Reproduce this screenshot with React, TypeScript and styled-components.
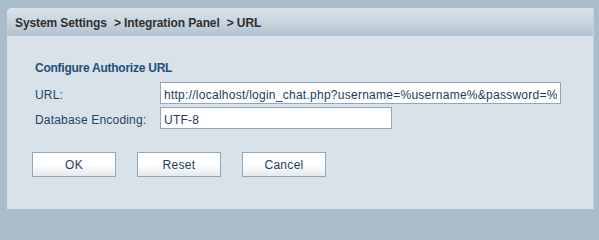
import styled, { createGlobalStyle } from "styled-components";

const GlobalStyle = createGlobalStyle`
  html, body {
    margin: 0;
    padding: 0;
    background: #a9bccb;
  }
  body {
    font-family: "Liberation Sans", Arial, sans-serif;
    font-size: 12px;
  }
`;

const crumbs = ["System Settings", "> Integration Panel", "> URL"];

const fields = [
  {
    label: "URL:",
    value: "http://localhost/login_chat.php?username=%username%&password=%",
    width: 401,
  },
  { label: "Database Encoding:", value: "UTF-8", width: 232 },
];

const App = () => (
  <StyledPage>
    <GlobalStyle />
    <StyledPanel>
      <StyledHeader>
        {crumbs.map((c) => (
          <StyledCrumb key={c}>{c}</StyledCrumb>
        ))}
      </StyledHeader>
      <StyledBody>
        <StyledTitle>Configure Authorize URL</StyledTitle>
        <StyledForm>
          {fields.map((f) => (
            <StyledRow key={f.label}>
              <StyledLabel>{f.label}</StyledLabel>
              <StyledInput $width={f.width} defaultValue={f.value} />
            </StyledRow>
          ))}
        </StyledForm>
        <StyledButtons>
          <StyledButton>OK</StyledButton>
          <StyledButton>Reset</StyledButton>
          <StyledButton>Cancel</StyledButton>
        </StyledButtons>
      </StyledBody>
    </StyledPanel>
  </StyledPage>
);

const StyledPage = styled.div`
  padding: 8px 5px 7px 7px;
`;

const StyledPanel = styled.div`
  width: 587px;
  height: 201px;
  box-sizing: border-box;
  background: #d9e1e9;
  border-top-left-radius: 5px;
  border-right: 1px solid #c5d1db;
  overflow: hidden;
  display: flex;
  flex-direction: column;
`;

const StyledHeader = styled.div`
  height: 28px;
  flex-shrink: 0;
  display: flex;
  align-items: center;
  padding: 1px 0 0 8px;
  box-sizing: border-box;
  background: linear-gradient(to bottom, #dbe3eb 0%, #c9d5df 50%, #b0c1d0 100%);
`;

const StyledCrumb = styled.span`
  font-weight: bold;
  font-size: 12px;
  color: #2e2e2e;
  letter-spacing: -0.1px;
  & + & {
    margin-left: 7px;
  }
`;

const StyledBody = styled.div`
  padding: 25px 0 0 28px;
`;

const StyledTitle = styled.div`
  font-weight: bold;
  font-size: 12px;
  line-height: 14px;
  color: #224f7a;
  letter-spacing: -0.25px;
`;

const StyledForm = styled.div`
  margin-top: 7px;
  display: flex;
  flex-direction: column;
  gap: 3px;
`;

const StyledRow = styled.div`
  display: flex;
  align-items: center;
`;

const StyledLabel = styled.label`
  width: 125px;
  flex-shrink: 0;
  color: #1c4568;
  font-size: 12px;
  letter-spacing: 0.18px;
  padding-top: 3px;
`;

const StyledInput = styled.input<{ $width: number }>`
  width: ${({ $width }) => $width}px;
  height: 22px;
  box-sizing: border-box;
  margin: 0;
  padding: 3px 3px 0;
  border: 1px solid #8fa8bd;
  background: #fff;
  color: #1a3d5d;
  font-family: "Liberation Sans", Arial, sans-serif;
  font-size: 12px;
  letter-spacing: 0.26px;
  outline: none;
`;

const StyledButtons = styled.div`
  display: flex;
  gap: 21px;
  margin: 23px 0 0 -3px;
`;

const StyledButton = styled.button`
  width: 84px;
  height: 25px;
  box-sizing: border-box;
  margin: 0;
  padding: 1px 0 0;
  border: 1px solid #8fa8bd;
  background: linear-gradient(to bottom, #ffffff 0%, #ffffff 50%, #e4e9ee 100%);
  color: #1b3d5c;
  font-family: "Liberation Sans", Arial, sans-serif;
  font-size: 12px;
  letter-spacing: 0.3px;
  cursor: pointer;
`;

export default App;
